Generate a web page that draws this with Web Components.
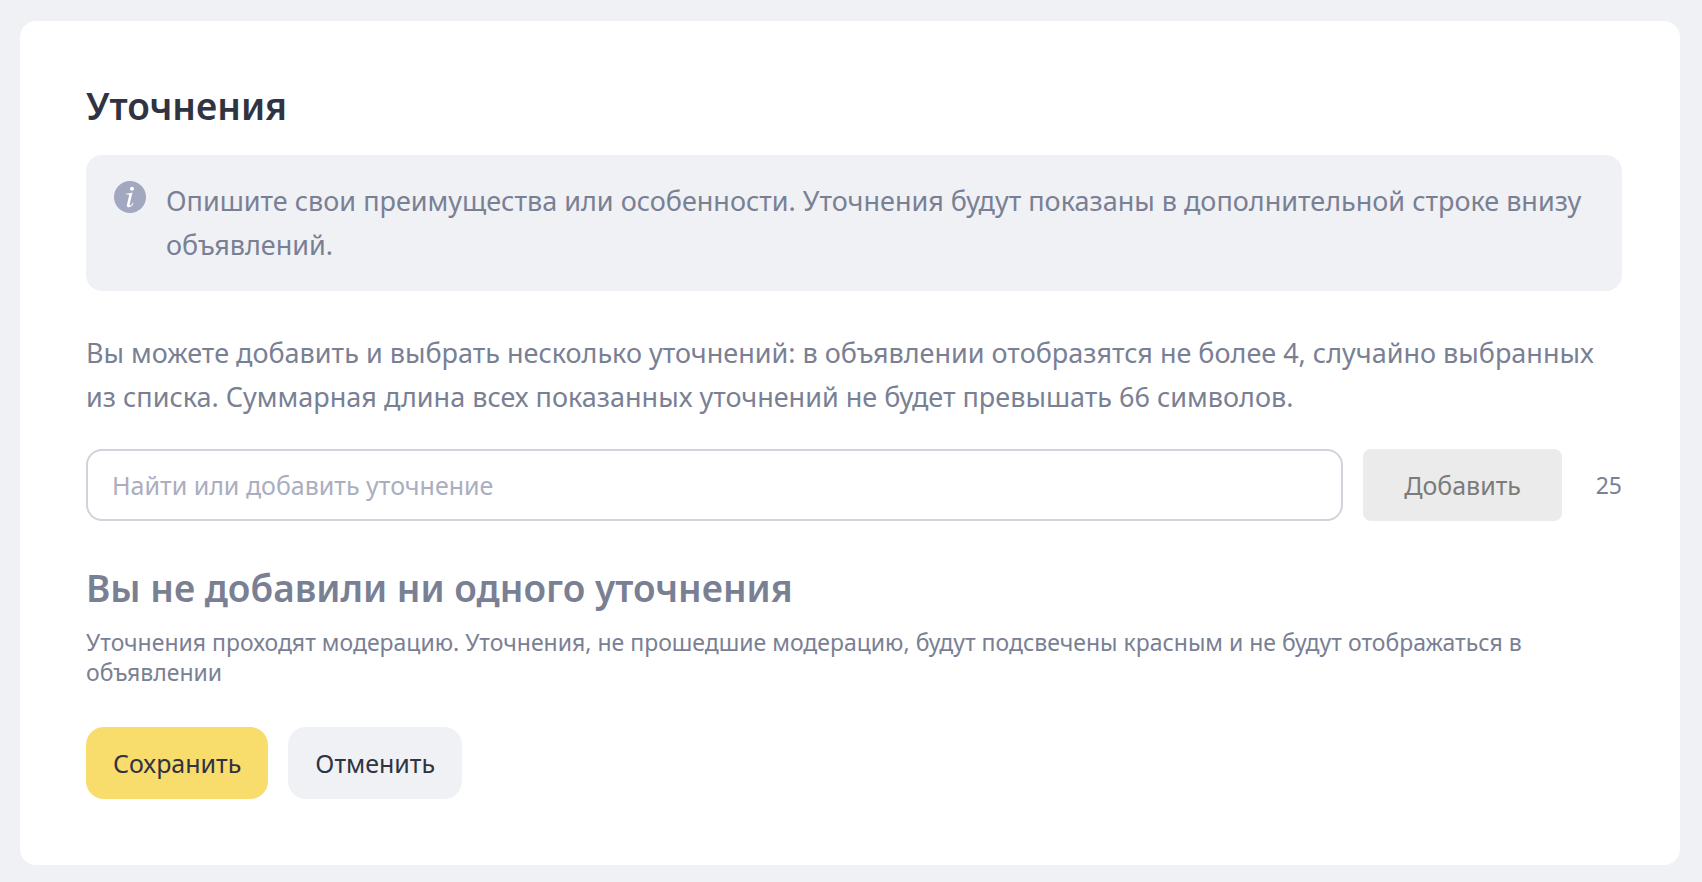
<!DOCTYPE html>
<html lang="ru">
<head>
<meta charset="utf-8">
<meta name="viewport" content="width=device-width, initial-scale=1">
<title>Уточнения</title>
<style>
  body {
    margin: 0;
    padding: 21px 22px 17px 20px;
    background: #eff1f5;
    color: #7a8094;
    font-family: "Noto Sans", "Open Sans", sans-serif;
    font-size: 27px;
    line-height: 44px;
  }
</style>
</head>
<body>
<callouts-page></callouts-page>

<script>
const define = (name, html, init) => {
  const template = document.createElement('template');
  template.innerHTML = html;
  customElements.define(name, class extends HTMLElement {
    constructor() {
      super();
      this.attachShadow({ mode: 'open' }).append(template.content.cloneNode(true));
    }
    connectedCallback() {
      if (init) init(this, this.shadowRoot);
    }
  });
};

define('ui-card', `
  <style>
    :host { display: block; background: #fff; border-radius: 16px; padding: 61px 58px 66px 66px; }
  </style>
  <slot></slot>
`);

define('info-note', `
  <style>
    :host { display: flex; align-items: flex-start; gap: 20px; padding: 24px 28px; border-radius: 16px; background: #eff1f5; }
    svg { flex: none; width: 32px; height: 32px; margin-top: 2px; }
    p { margin: 0; }
  </style>
  <svg viewBox="0 0 32 32" aria-hidden="true">
    <circle cx="16" cy="16" r="16" fill="#a1a8bf"/>
    <circle cx="18" cy="7.7" r="2" fill="#fff"/>
    <path d="M12.2 12.8C14.4 12.5 16.5 12 18.5 11.5L15.8 22.8C15.5 24.3 15.8 24.9 16.6 24.4C17.5 23.8 18.2 22.8 18.9 21.7L19.6 22.2C18.3 24.7 16.6 26.3 14.6 26.3C13 26.3 12.6 25 13 23.2L15 14.9C15.3 13.8 14.8 13.6 13.7 13.6H12.1Z" fill="#fff"/>
  </svg>
  <p><slot></slot></p>
`);

define('ui-button', `
  <style>
    :host { display: block; flex: none; }
    button {
      height: 72px; padding: 0 27px; border: 0; border-radius: 18px;
      background: #eff1f5; color: #303342; font: inherit; font-size: 25px; cursor: pointer;
    }
    :host([view="action"]) button { background: #f8dc6c; }
    button:disabled { padding: 0 41px; border-radius: 8px; background: #ebebeb; color: #7b7b7b; cursor: default; }
  </style>
  <button type="button"><slot></slot></button>
`, (host, root) => {
  root.querySelector('button').disabled = host.hasAttribute('disabled');
});

define('ui-textbox', `
  <style>
    :host { display: block; flex: 1; min-width: 0; }
    input {
      display: block; box-sizing: border-box; width: 100%; height: 72px; padding: 0 24px;
      border: 2px solid #d0d3da; border-radius: 16px; background: #fff;
      color: #303342; font: inherit; font-size: 25px; outline: none;
    }
    input::placeholder { color: #abaec0; opacity: 1; }
  </style>
  <input type="text">
`, (host, root) => {
  const input = root.querySelector('input');
  input.placeholder = host.getAttribute('placeholder');
  input.setAttribute('aria-label', input.placeholder);
});

define('add-row', `
  <style>
    :host { display: flex; align-items: center; gap: 20px; }
    output { flex: none; min-width: 40px; text-align: right; font-size: 23px; }
  </style>
  <ui-textbox placeholder="Найти или добавить уточнение"></ui-textbox>
  <ui-button disabled>Добавить</ui-button>
  <output>25</output>
`);

define('callouts-page', `
  <style>
    :host { display: block; }
    h1, h2, p { margin: 0; }
    h1, h2 { font-size: 37px; line-height: 48px; font-weight: 620; }
    h1 { color: #303342; margin-bottom: 25px; }
    .about { margin: 40px 0 30px; }
    h2 { margin: 43px 0 15px; }
    .hint { font-size: 23px; line-height: 30px; }
    .actions { display: flex; gap: 20px; margin-top: 40px; }
  </style>
  <ui-card>
    <h1>Уточнения</h1>
    <info-note>Опишите свои преимущества или особенности. Уточнения будут показаны в дополнительной строке внизу объявлений.</info-note>
    <p class="about">Вы можете добавить и выбрать несколько уточнений: в объявлении отобразятся не более 4, случайно выбранных из списка. Суммарная длина всех показанных уточнений не будет превышать 66 символов.</p>
    <add-row></add-row>
    <h2>Вы не добавили ни одного уточнения</h2>
    <p class="hint">Уточнения проходят модерацию. Уточнения, не прошедшие модерацию, будут подсвечены красным и не будут отображаться в объявлении</p>
    <div class="actions">
      <ui-button view="action">Сохранить</ui-button>
      <ui-button>Отменить</ui-button>
    </div>
  </ui-card>
`);
</script>
</body>
</html>
